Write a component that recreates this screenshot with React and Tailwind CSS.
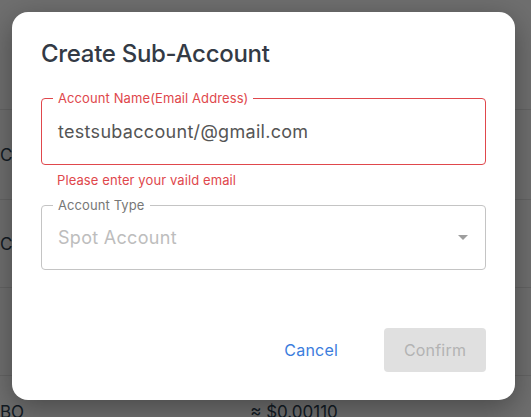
// ── Background page (dimmed under the overlay) ───────────────────────────────

function BackgroundRows() {
  return (
    <div className="absolute inset-0 bg-[#f5f5f5] text-[#2c3e50] text-[17px] leading-[20px]">
      <div className="h-[110px] border-b border-[#ddd]" />
      <div className="h-[90px] border-b border-[#ddd] flex items-center">
        <span>C</span>
      </div>
      <div className="h-[88px] border-b border-[#ddd] flex items-center">
        <span>C</span>
      </div>
      <div className="h-[88px] border-b border-[#ddd]" />
      <div className="flex items-start pt-[26px]">
        <span>BO</span>
        <span className="ml-[226px]">≈ $0.00110</span>
      </div>
    </div>
  )
}

// ── Outlined field ───────────────────────────────────────────────────────────

function OutlinedField({ label, error, height = 'h-[67px]', children, trailing }) {
  const border = error ? 'border-[#e0474c]' : 'border-[#c4c4c4]'
  const labelColor = error ? 'text-[#e0474c]' : 'text-[#777]'
  return (
    <div className={`relative ${height} rounded-[4px] border ${border} flex items-center pl-[16px] pr-[16px]`}>
      <span className={`absolute -top-[9px] left-[11px] bg-white px-[5px] text-[13px] leading-[16px] tracking-[0.1px] ${labelColor}`}>
        {label}
      </span>
      <div className="flex-1">{children}</div>
      {trailing}
    </div>
  )
}

export default function App() {
  return (
    <div className="relative w-[531px] h-[417px] overflow-hidden font-['Inter',sans-serif]">
      <BackgroundRows />
      <div className="absolute inset-0 bg-black/55" />

      {/* Dialog */}
      <div className="absolute left-[12px] top-[12px] w-[503px] h-[388px] bg-white rounded-[16px] shadow-[0_8px_30px_rgba(0,0,0,0.35)] px-[29px] pt-[26px] flex flex-col">
        <h2 className="text-[24px] leading-[32px] font-medium text-[#333a45] tracking-[-0.3px]">Create Sub-Account</h2>

        <div className="mt-[28px]">
          <OutlinedField label="Account Name(Email Address)" error>
            <span className="text-[18px] text-[#555] tracking-[0.3px]">testsubaccount/@gmail.com</span>
          </OutlinedField>
          <p className="mt-[7px] pl-[16px] text-[13px] leading-[16px] text-[#e0474c] tracking-[0.1px]">
            Please enter your vaild email
          </p>
        </div>

        <div className="mt-[17px]">
          <OutlinedField
            label="Account Type"
            height="h-[65px]"
            trailing={
              <svg width="10" height="5" viewBox="0 0 10 5" className="mr-[1px]">
                <path d="M0 0 L10 0 L5 5 Z" fill="#9e9e9e" />
              </svg>
            }
          >
            <span className="text-[18px] text-[#bdbdbd] tracking-[0.3px]">Spot Account</span>
          </OutlinedField>
        </div>

        <div className="flex-1" />

        <div className="flex items-center justify-end gap-[34px] pb-[28px]">
          <button className="text-[16px] text-[#3b7ddd] px-[12px] py-[8px] tracking-[0.2px]">Cancel</button>
          <button className="w-[102px] h-[44px] rounded-[4px] bg-[#e0e0e0] text-[16px] text-[#b3b3b3] tracking-[0.2px]">
            Confirm
          </button>
        </div>
      </div>
    </div>
  )
}
